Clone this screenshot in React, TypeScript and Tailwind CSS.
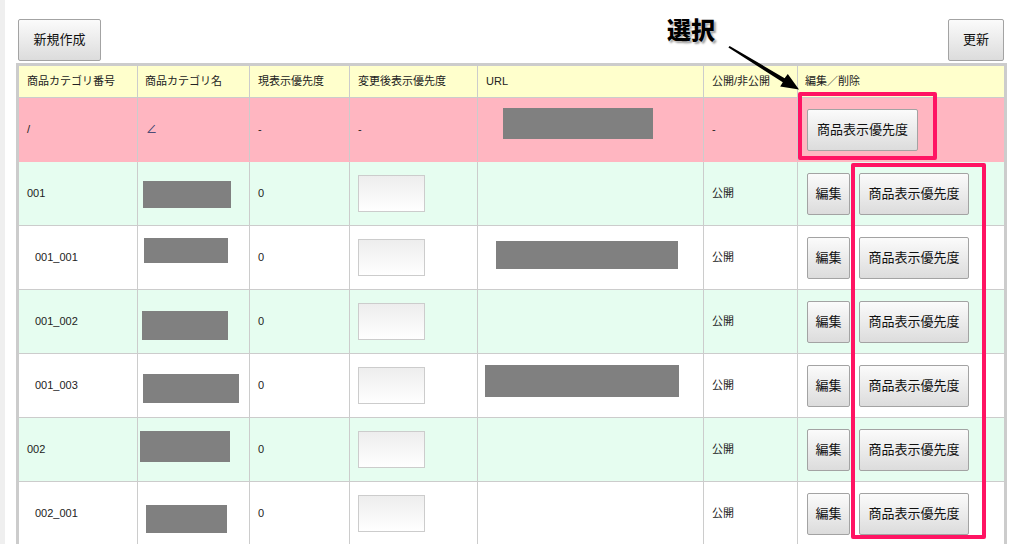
import React from 'react';

type Row = {
  id: string;
  child: boolean;
  green: boolean;
  name: string;
  url?: string;
};

const rows: Row[] = [
  { id: '001', child: false, green: true, name: 'ml-[5px] mt-[19px] w-[88px] h-[27px]' },
  { id: '001_001', child: true, green: false, name: 'ml-[6px] mt-[12px] w-[84px] h-[25px]', url: 'ml-[18px] mt-[15px] w-[182px] h-[28px]' },
  { id: '001_002', child: true, green: true, name: 'ml-[4px] mt-[21px] w-[86px] h-[29px]' },
  { id: '001_003', child: true, green: false, name: 'ml-[5px] mt-[20px] w-[96px] h-[29px]', url: 'ml-[7px] mt-[11px] w-[194px] h-[32px]' },
  { id: '002', child: false, green: true, name: 'ml-[2px] mt-[13px] w-[90px] h-[31px]' },
  { id: '002_001', child: true, green: false, name: 'ml-[8px] mt-[23px] w-[81px] h-[28px]' },
];

// widths include the 1px left rule of columns 2-7
const cols = 'grid grid-cols-[118px_112px_100px_128px_226px_94px_207px]';
const cell = 'border-l border-[#cccccc]';

const Btn: React.FC<{ label: string; className?: string }> = ({ label, className = '' }) => (
  <button
    className={`h-[42px] shrink-0 rounded-[2px] border border-[#a3a3a3] bg-gradient-to-b from-[#fbfbfb] to-[#dcdcdc] text-[13px] text-[#111111] ${className}`}
  >
    {label}
  </button>
);

export default function App() {
  return (
    <div className="relative flex h-[544px] w-[1012px] overflow-hidden bg-white font-[family-name:'Liberation_Sans','Noto_Sans_CJK_JP',sans-serif] text-[#222222]">
      <div className="h-full w-[5px] shrink-0 bg-[#efefef]" />
      <div className="ml-[11px] w-[991px] shrink-0">
        {/* toolbar */}
        <div className="flex justify-between pl-[2px] pr-[3px] pt-[19px]">
          <Btn label="新規作成" className="w-[83px]" />
          <Btn label="更新" className="w-[56px]" />
        </div>

        {/* table */}
        <div className="mt-[2px] border-x-[3px] border-t-[3px] border-[#cccccc] text-[11px]">
          <div className={`${cols} h-[32px] border-b border-[#cccccc] bg-[#ffffcc]`}>
            <div className="flex items-center pl-[8px]">商品カテゴリ番号</div>
            <div className={`${cell} flex items-center pl-[7px]`}>商品カテゴリ名</div>
            <div className={`${cell} flex items-center pl-[8px]`}>現表示優先度</div>
            <div className={`${cell} flex items-center pl-[8px]`}>変更後表示優先度</div>
            <div className={`${cell} flex items-center pl-[8px]`}>URL</div>
            <div className={`${cell} flex items-center overflow-hidden whitespace-nowrap pl-[8px]`}>公開/非公開</div>
            <div className={`${cell} flex items-center pl-[7px]`}>編集／削除</div>
          </div>

          {/* root row */}
          <div className={`${cols} h-[64px] border-b border-[#ffb6c1] bg-[#ffb6c1]`}>
            <div className="flex items-center pl-[8px]">/</div>
            <div className={`${cell} flex items-center pl-[8px] text-[#1c3466]`}>∠</div>
            <div className={`${cell} flex items-center pl-[8px]`}>-</div>
            <div className={`${cell} flex items-center pl-[8px]`}>-</div>
            <div className={cell}>
              <div className="ml-[25px] mt-[10px] h-[31px] w-[150px] bg-[#808080]" />
            </div>
            <div className={`${cell} flex items-center pl-[8px]`}>-</div>
            <div className={`${cell} flex items-center pl-[9px]`}>
              <Btn label="商品表示優先度" className="w-[111px]" />
            </div>
          </div>

          {rows.map((r) => (
            <div
              key={r.id}
              className={`${cols} h-[64px] border-b border-[#cccccc] ${r.green ? 'bg-[#e6fdf0]' : 'bg-white'}`}
            >
              <div className={`flex items-center ${r.child ? 'pl-[16px]' : 'pl-[8px]'}`}>{r.id}</div>
              <div className={cell}>
                <div className={`bg-[#808080] ${r.name}`} />
              </div>
              <div className={`${cell} flex items-center pl-[8px]`}>0</div>
              <div className={`${cell} flex items-center pl-[8px]`}>
                <div className="h-[37px] w-[67px] border border-[#cccccc] bg-gradient-to-b from-[#ededed] to-white" />
              </div>
              <div className={cell}>{r.url && <div className={`bg-[#808080] ${r.url}`} />}</div>
              <div className={`${cell} flex items-center pl-[8px]`}>公開</div>
              <div className={`${cell} flex items-center gap-[9px] pl-[9px]`}>
                <Btn label="編集" className="w-[43px]" />
                <Btn label="商品表示優先度" className="w-[110px]" />
              </div>
            </div>
          ))}
        </div>
      </div>

      {/* annotation */}
      <div className="absolute left-[667px] top-[11px] font-[family-name:'Noto_Sans_CJK_JP',sans-serif] text-[24px] font-black text-black [text-shadow:0_0_2px_#fff,2px_2px_2px_#9a9a9a]">
        選択
      </div>
      <svg className="absolute left-0 top-0" width="1012" height="544">
        <polygon
          points="729.6,45.9 784.6,78.2 787.8,73.9 799,89.5 780.2,86.4 782.8,82.2 728.4,47.6"
          fill="#000"
        />
      </svg>
      <div className="absolute left-[798px] top-[92px] h-[68px] w-[139px] rounded-[2px] border-4 border-[#ff1463]" />
      <div className="absolute left-[851px] top-[163px] h-[376px] w-[135px] rounded-[2px] border-4 border-[#ff1463]" />
    </div>
  );
}
